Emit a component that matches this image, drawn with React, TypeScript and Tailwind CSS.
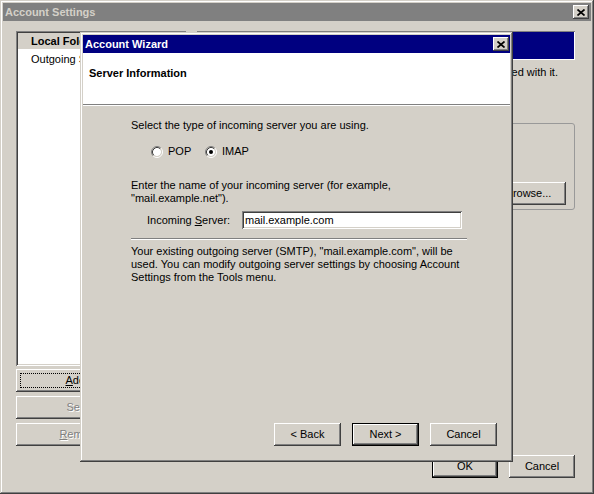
import React from "react";

// classic 3D edges
const raised =
  "shadow-[inset_-1px_-1px_#404040,inset_1px_1px_#fff,inset_-2px_-2px_#808080,inset_2px_2px_#d4d0c8]";
const windowFrame =
  "shadow-[inset_-1px_-1px_#404040,inset_1px_1px_#d4d0c8,inset_-2px_-2px_#808080,inset_2px_2px_#fff]";
const sunken =
  "shadow-[inset_1px_1px_#808080,inset_-1px_-1px_#fff,inset_2px_2px_#404040,inset_-2px_-2px_#d4d0c8]";

function CloseButton() {
  return (
    <div className={`w-[16px] h-[14px] bg-[#d4d0c8] flex items-center justify-center ${raised}`}>
      <svg width="8" height="7" viewBox="0 0 8 7" className="block">
        <path d="M0.5 0.5 L7.5 6.5 M7.5 0.5 L0.5 6.5" stroke="#000" strokeWidth="1.7" />
      </svg>
    </div>
  );
}

function Radio({ checked }: { checked?: boolean }) {
  return (
    <svg width="12" height="12" viewBox="0 0 12 12" className="block shrink-0">
      <circle cx="6" cy="6" r="4" fill="#fff" />
      <path d="M2.11 9.89 A5.5 5.5 0 0 1 9.89 2.11" stroke="#808080" fill="none" />
      <path d="M9.89 2.11 A5.5 5.5 0 0 1 2.11 9.89" stroke="#fff" fill="none" />
      <path d="M2.82 9.18 A4.5 4.5 0 0 1 9.18 2.82" stroke="#404040" fill="none" />
      <path d="M9.18 2.82 A4.5 4.5 0 0 1 2.82 9.18" stroke="#d4d0c8" fill="none" />
      {checked && <circle cx="6" cy="6" r="2" fill="#000" />}
    </svg>
  );
}

function Btn({
  children,
  className = "",
  isDefault,
  disabled,
  focused,
}: {
  children: React.ReactNode;
  className?: string;
  isDefault?: boolean;
  disabled?: boolean;
  focused?: boolean;
}) {
  return (
    <div
      className={`relative h-[23px] bg-[#d4d0c8] flex items-center justify-center leading-[13px] ${
        isDefault ? "border border-black" : ""
      } ${raised} ${
        disabled ? "text-[#808080] [text-shadow:1px_1px_0_#fff]" : "text-black"
      } ${className}`}
    >
      {focused && (
        <div className="absolute inset-[4px] border border-dotted border-black" />
      )}
      {children}
    </div>
  );
}

function AccountWizard() {
  return (
    <div
      className={`absolute left-[80px] top-[32px] w-[433px] h-[430px] bg-[#d4d0c8] p-[3px] flex flex-col ${windowFrame}`}
    >
      <div className="h-[18px] bg-[#000080] flex items-center justify-between pl-[2px] pr-[1px]">
        <span className="text-white font-bold leading-[13px]">Account Wizard</span>
        <CloseButton />
      </div>
      <div className="h-[52px] bg-white border-b border-[#808080] pl-[6px] pt-[14px]">
        <div className="font-bold leading-[13px]">Server Information</div>
      </div>
      <div className="h-px bg-white" />
      <div className="flex-1 flex flex-col pl-[48px] pr-[43px] pt-[13px] leading-[13px]">
        <p>Select the type of incoming server you are using.</p>
        <div className="flex items-center mt-[13px] pl-[20px] h-[13px]">
          <div className="flex items-center gap-[5px] w-[54px]">
            <Radio />
            <span>POP</span>
          </div>
          <div className="flex items-center gap-[5px]">
            <Radio checked />
            <span>IMAP</span>
          </div>
        </div>
        <p className="mt-[21px]">
          Enter the name of your incoming server (for example,
          <br />
          "mail.example.net").
        </p>
        <div className="flex items-center mt-[6px] pl-[16px]">
          <span className="w-[95px]">
            Incoming <span className="underline">S</span>erver:
          </span>
          <div className={`w-[220px] h-[18px] bg-white flex items-center pl-[3px] ${sunken}`}>
            mail.example.com
          </div>
        </div>
        <div className="mt-[9px] h-[2px] border-t border-[#808080] border-b border-b-white" />
        <p className="mt-[5px]">
          Your existing outgoing server (SMTP), "mail.example.com", will be
          <br />
          used. You can modify outgoing server settings by choosing Account
          <br />
          Settings from the Tools menu.
        </p>
      </div>
      <div className="flex justify-end gap-[11px] pr-[13px] pb-[13px]">
        <Btn className="w-[67px]">&lt; Back</Btn>
        <Btn className="w-[67px]" isDefault>
          Next &gt;
        </Btn>
        <Btn className="w-[67px]">Cancel</Btn>
      </div>
    </div>
  );
}

export default function App() {
  return (
    <div
      className={`relative w-[594px] h-[494px] bg-[#d4d0c8] p-[3px] flex flex-col font-['Liberation_Sans',Arial,sans-serif] text-[11px] text-black select-none ${windowFrame}`}
    >
      <div className="h-[18px] bg-[#808080] flex items-center justify-between pl-[2px] pr-[2px]">
        <span className="text-[#d4d0c8] font-bold leading-[13px]">Account Settings</span>
        <CloseButton />
      </div>

      <div className="flex-1 flex flex-col pl-[13px] pr-[16px] pt-[10px]">
        <div className="flex gap-[11px] h-[415px]">
          <div className="w-[170px] flex flex-col">
            <div className={`h-[335px] bg-white p-[2px] ${sunken}`}>
              <div className="h-[16px] bg-[#d4d0c8] flex items-center pl-[13px] font-bold">
                Local Folders
              </div>
              <div className="h-[16px] mt-[2px] flex items-center pl-[13px]">
                Outgoing Server (SMTP)
              </div>
            </div>
            <div className="mt-[3px] flex flex-col gap-[4px]">
              <Btn focused>
                <span>
                  <span className="underline">A</span>dd Account...
                </span>
              </Btn>
              <Btn disabled>Set as Default</Btn>
              <Btn disabled>
                <span>
                  <span className="underline">R</span>emove Account
                </span>
              </Btn>
            </div>
          </div>

          <div className="flex-1 flex flex-col">
            <div className="h-[29px] bg-[#000080] shadow-[inset_1px_1px_#808080,inset_-1px_-1px_#fff] flex items-center pl-[6px]">
              <span className="text-white font-bold">Local Folders</span>
            </div>
            <p className="mt-[6px] leading-[13px] text-right pr-[17px] whitespace-nowrap">
              This account has no server associated with it.
            </p>
            <div className="mt-[44px] h-[87px] border border-[#999] rounded-[3px] flex flex-col justify-end items-end pr-[8px] pb-[4px]">
              <Btn className="w-[75px]">Browse...</Btn>
            </div>
          </div>
        </div>

        <div className="flex justify-end gap-[11px] mt-[9px]">
          <Btn className="w-[66px]" isDefault>
            OK
          </Btn>
          <Btn className="w-[66px]">Cancel</Btn>
        </div>
      </div>

      <AccountWizard />
    </div>
  );
}
